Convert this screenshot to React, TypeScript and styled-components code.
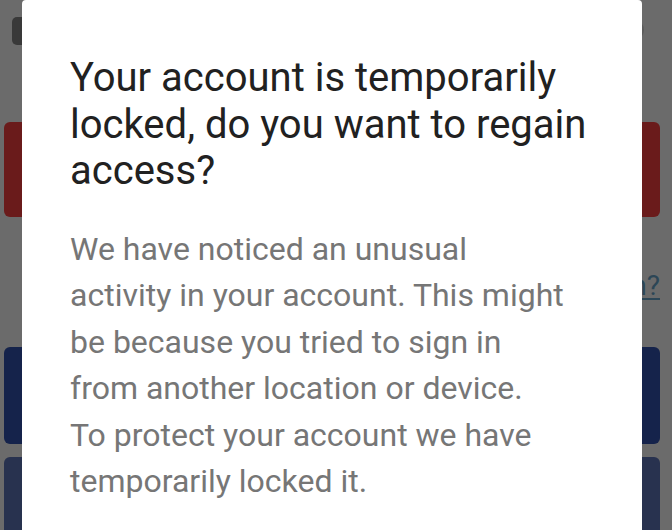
import React from 'react';
import styled, { createGlobalStyle } from 'styled-components';

const GlobalStyle = createGlobalStyle`
  html, body {
    margin: 0;
    padding: 0;
    background: #6b6b6b;
  }
  * {
    box-sizing: border-box;
  }
`;

const Screen = styled.div`
  position: relative;
  width: 672px;
  height: 530px;
  overflow: hidden;
  background: #6b6b6b;
  font-family: Roboto, "Noto Sans", sans-serif;
`;

const Behind = styled.div`
  display: flex;
  flex-direction: column;
  padding: 0 12px 0 4px;
`;

const Header = styled.div`
  height: 122px;
  display: flex;
  justify-content: space-between;
  align-items: flex-start;
  padding: 17px 16px 0 8px;
`;

const BackIcon = styled.div`
  width: 22px;
  height: 28px;
  border-radius: 5px;
  background: #393939;
`;

const MenuIcon = styled.div`
  width: 14px;
  height: 18px;
  margin-top: 4px;
  border-radius: 50%;
  background: #5c5c5c;
`;

const ActionButton = styled.div<{ $tone: string; $height: number }>`
  height: ${(p) => p.$height}px;
  border-radius: 6px;
  background: ${(p) => p.$tone};
`;

const LinkRow = styled.div`
  height: 130px;
  display: flex;
  justify-content: flex-end;
  align-items: flex-start;
  padding-top: 52px;
`;

const HelpLink = styled.span`
  font-size: 28px;
  color: #2c4656;
  text-decoration: underline;
  text-underline-offset: 3px;
`;

const Gap = styled.div<{ $size: number }>`
  height: ${(p) => p.$size}px;
`;

// Dialog
const Dialog = styled.div`
  position: absolute;
  left: 22px;
  top: 0;
  width: 620px;
  height: 560px;
  background: #ffffff;
  border-radius: 4px;
  padding: 55px 40px 0 48px;
`;

const Title = styled.h1`
  margin: 0;
  font-family: Roboto, "Noto Sans", sans-serif;
  font-weight: 400;
  font-size: 40px;
  line-height: 46.5px;
  color: #212121;
`;

const Message = styled.p`
  margin: 31.5px 32px 0 0;
  font-family: Roboto, "Noto Sans", sans-serif;
  font-size: 32px;
  line-height: 46.4px;
  color: #767676;
`;

export default function App() {
  return (
    <>
      <GlobalStyle />
      <Screen>
        <Behind>
          <Header>
            <BackIcon />
            <MenuIcon />
          </Header>
          <ActionButton $tone="#6a1b1b" $height={95} />
          <LinkRow>
            <HelpLink>Need help to sign in?</HelpLink>
          </LinkRow>
          <ActionButton $tone="#15234b" $height={97} />
          <Gap $size={13} />
          <ActionButton $tone="#28324f" $height={90} />
        </Behind>
        <Dialog>
          <Title>Your account is temporarily locked, do you want to regain access?</Title>
          <Message>
            We have noticed an unusual activity in your account. This might be because you tried to sign in
            from another location or device.
            <br />
            To protect your account we have temporarily locked it.
          </Message>
        </Dialog>
      </Screen>
    </>
  );
}
